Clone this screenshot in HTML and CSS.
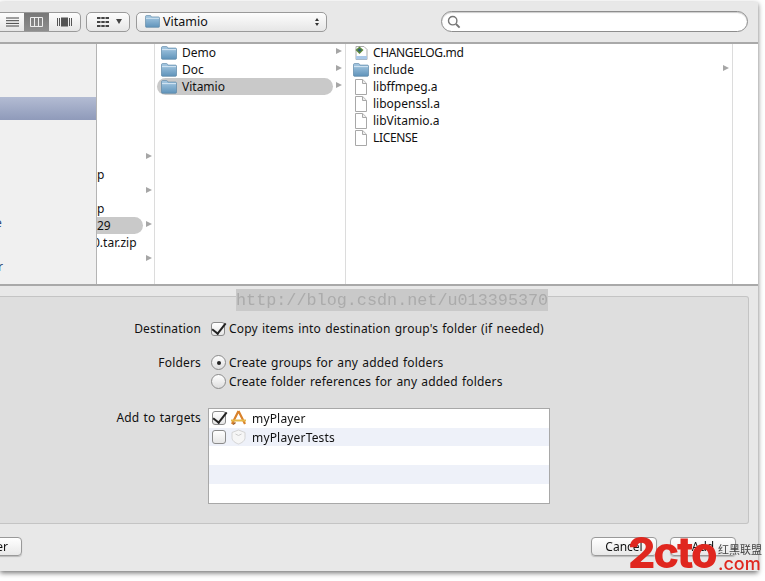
FILE: index.html
```html
<!DOCTYPE html>
<html lang="en">
<head>
<meta charset="utf-8">
<title>Add files</title>
<link rel="stylesheet" href="styles.css">
</head>
<body>
<svg class="defs" width="0" height="0" aria-hidden="true">
  <defs>
    <linearGradient id="fg" x1="0" y1="0" x2="0" y2="1"><stop offset="0" stop-color="#a9cbe4"/><stop offset="1" stop-color="#5f93ba"/></linearGradient>
    <symbol id="folder" viewBox="0 0 16 14">
      <path d="M.5 3V1.6C.5 1 1 .6 1.5.6h4c.6 0 .9.3 1.1.9l.2.6h7.7c.6 0 1 .4 1 1v9.2c0 .6-.4 1-1 1H1.5c-.6 0-1-.4-1-1z" fill="url(#fg)" stroke="#5d87a6" stroke-width=".7"/>
      <path d="M1 3.6h14" stroke="#d5e6f3" stroke-width="1"/>
    </symbol>
    <symbol id="doc" viewBox="0 0 12 16">
      <path d="M.5.5h7.2l3.8 3.8v11.2H.5z" fill="#fff" stroke="#a8a8a8"/>
      <path d="M7.5.7v3.8h3.8" fill="#eee" stroke="#a8a8a8"/>
    </symbol>
  </defs>
</svg>
<main class="window">
  <header class="toolbar">
    <div class="seg">
      <span class="seg-item seg-list"><svg width="13" height="10" viewBox="0 0 13 10"><path d="M0 1h13M0 3.7h13M0 6.4h13M0 9h13" stroke="#444" fill="none"/></svg></span>
      <span class="seg-item seg-on"><svg width="13" height="10" viewBox="0 0 13 10"><path d="M.5.5h12v9H.5zM4.5.5v9M8.5.5v9" stroke="#eee" fill="none"/></svg></span>
      <span class="seg-item seg-flow"><svg width="15" height="10" viewBox="0 0 15 10"><path d="M.5 1v8M2.5 1v8M12.5 1v8M14.5 1v8" stroke="#555" fill="none"/><path d="M4 .5h7v9H4z" fill="#555"/></svg></span>
    </div>
    <div class="btn-group"><svg width="12" height="10" viewBox="0 0 12 10"><path d="M0 1h3.5M4.3 1h3.4M8.5 1H12M0 5h3.5M4.3 5h3.4M8.5 5H12M0 9h3.5M4.3 9h3.4M8.5 9H12" stroke="#444" stroke-width="1.8" fill="none"/></svg><i class="down"></i></div>
    <div class="popup">
      <svg class="ico-16" width="15" height="13"><use href="#folder"/></svg>
      <span class="popup-name">Vitamio</span>
      <span class="updown"><i class="up-a"></i><i class="down-a"></i></span>
    </div>
    <div class="search"><svg width="14" height="14" viewBox="0 0 14 14"><circle cx="5.7" cy="5.7" r="4.2" fill="none" stroke="#777" stroke-width="1.4"/><path d="M9 9l3.6 3.6" stroke="#777" stroke-width="1.9"/></svg></div>
  </header>

  <section class="browser">
    <aside class="col-side">
      <div class="side-sel"></div>
      <div class="side-row"><span class="clip-e">e</span></div>
      <div class="side-row"></div>
      <div class="side-row"><span class="clip-r">r</span></div>
    </aside>
    <div class="col col-a">
      <div class="row"><span class="arrow"></span></div>
      <div class="row"><span class="name">p</span></div>
      <div class="row"><span class="arrow"></span></div>
      <div class="row"><span class="name">p</span></div>
      <div class="row"><span class="pill-end"><span class="name">29</span></span><span class="arrow"></span></div>
      <div class="row"><span class="name name-zip">0.tar.zip</span></div>
      <div class="row"><span class="arrow"></span></div>
    </div>
    <div class="col col-b">
      <div class="frow"><svg width="16" height="14"><use href="#folder"/></svg><span>Demo</span><span class="arrow"></span></div>
      <div class="frow"><svg width="16" height="14"><use href="#folder"/></svg><span>Doc</span><span class="arrow"></span></div>
      <div class="frow frow-sel"><svg width="16" height="14"><use href="#folder"/></svg><span>Vitamio</span><span class="arrow"></span></div>
    </div>
    <div class="col col-c">
      <div class="drow"><svg width="16" height="16" viewBox="0 0 16 16"><path d="M3 1.5h8l3 3v10H3z" fill="#fff" stroke="#aaa"/><path d="M3 11h11v3.5H3z" fill="#a9c8e8"/><path d="M6.5 1.5l4 3.5-4 4-4-4z" fill="#5c8a3a"/><path d="M6.5 3.5l2 1.6-2 2-2-2z" fill="#2f5a82"/></svg><span class="caps">CHANGELOG.md</span></div>
      <div class="drow"><svg width="16" height="14"><use href="#folder"/></svg><span>include</span><span class="arrow"></span></div>
      <div class="drow"><svg width="12" height="16" class="docico"><use href="#doc"/></svg><span>libffmpeg.a</span></div>
      <div class="drow"><svg width="12" height="16" class="docico"><use href="#doc"/></svg><span>libopenssl.a</span></div>
      <div class="drow"><svg width="12" height="16" class="docico"><use href="#doc"/></svg><span>libVitamio.a</span></div>
      <div class="drow"><svg width="12" height="16" class="docico"><use href="#doc"/></svg><span class="caps">LICENSE</span></div>
    </div>
    <div class="col col-d"></div>
  </section>

  <section class="lower">
    <form class="panel">
      <div class="lbl">Destination</div>
      <div class="opt"><span class="check is-on"></span><span>Copy items into destination group's folder (if needed)</span></div>
      <div class="lbl lbl-folders">Folders</div>
      <div class="opts lbl-folders">
        <div class="opt"><span class="radio is-on"></span><span>Create groups for any added folders</span></div>
        <div class="opt"><span class="radio"></span><span>Create folder references for any added folders</span></div>
      </div>
      <div class="lbl lbl-targets">Add to targets</div>
      <div class="targets">
        <div class="trow"><span class="check is-on"></span><svg width="17" height="16" viewBox="0 0 17 16"><path d="M8.5 1L2 14M8.5 1L15 14" stroke="#d9822b" stroke-width="2.2" fill="none"/><path d="M1 10.5h15" stroke="#e6b84a" stroke-width="2"/><path d="M3 14.5l2.5-2" stroke="#a05a20" stroke-width="1.6"/></svg><span>myPlayer</span></div>
        <div class="trow trow-alt"><span class="check"></span><svg width="17" height="16" viewBox="0 0 17 16"><path d="M8.5 1l6.5 2.5v5c0 3.500-3.500 5.500-6.500 6.500C5.500 14 2 12 2 8.500v-5z" fill="#f6f6f6" stroke="#d4d4d4"/><path d="M5.500 5l3 1.500 3-1.500" fill="none" stroke="#ccc"/></svg><span>myPlayerTests</span></div>
        <div class="trow"></div>
        <div class="trow trow-alt"></div>
        <div class="trow"></div>
      </div>
    </form>
    <footer class="actions">
      <button class="btn btn-new" type="button">New Folder</button>
      <span class="spacer"></span>
      <button class="btn" type="button">Cancel</button>
      <button class="btn" type="button">Add</button>
    </footer>
  </section>
</main>
<div class="watermark">http://blog.csdn.net/u013395370</div>
<div class="logo"><span class="logo-2cto">2cto</span><span class="logo-side"><span class="logo-cn">红黑联盟</span><span class="logo-com">.com</span></span></div>
</body>
</html>
```
FILE: styles.css
```css
* { box-sizing: border-box; }
html, body { margin: 0; padding: 0; }
body {
  width: 765px; height: 581px; overflow: hidden; background: #fff; position: relative;
  font-family: "Noto Sans", "Open Sans", sans-serif; font-size: 12px; color: #111;
}
.defs { position: absolute; }
.window {
  width: 758px; height: 569px; margin-top: 2px; background: #e8e8e8;
  box-shadow: 0 2px 5px rgba(0,0,0,.55); display: flex; flex-direction: column; overflow: hidden;
  filter: blur(.35px);
}
.toolbar {
  height: 42px; flex: none; display: flex; align-items: center; background: #e8e8e8;
  border-bottom: 2px solid #a9a9a9; padding: 0 10px 1px 0;
}
.seg {
  width: 81px; height: 20px; display: flex; border: 1px solid #9a9a9a; border-left: 0;
  border-radius: 0 5px 5px 0; background: linear-gradient(#fdfdfd, #e6e6e6); overflow: hidden;
}
.seg-item { display: flex; align-items: center; justify-content: center; }
.seg-list { width: 24px; }
.seg-on { width: 25px; background: linear-gradient(#777, #8e8e8e); }
.seg-flow { flex: 1; }
.btn-group {
  width: 44px; height: 20px; margin-left: 5px; border: 1px solid #9a9a9a; border-radius: 5px;
  background: linear-gradient(#fdfdfd, #e6e6e6); display: flex; align-items: center; gap: 7px; padding-left: 10px;
}
.down { width: 0; height: 0; border: 3.5px solid transparent; border-top: 5px solid #444; border-bottom: 0; }
.popup {
  width: 191px; height: 20px; margin-left: 6px; border: 1px solid #9a9a9a; border-radius: 5px;
  background: linear-gradient(#fdfdfd, #e6e6e6); display: flex; align-items: center; padding: 0 7px 0 8px;
}
.popup-name { margin-left: 3px; flex: 1; font-size: 12.5px; }
.updown { display: flex; flex-direction: column; gap: 2px; }
.up-a, .down-a { width: 0; height: 0; border: 2.5px solid transparent; }
.up-a { border-bottom: 3.5px solid #333; border-top: 0; }
.down-a { border-top: 3.5px solid #333; border-bottom: 0; }
.search {
  width: 307px; height: 21px; margin-left: auto; border: 1px solid #8d8d8d; border-radius: 11px;
  background: #fff; box-shadow: inset 0 1px 1px #ccc; display: flex; align-items: center; padding-left: 5px;
}
.browser { height: 242px; flex: none; display: flex; background: #fff; border-bottom: 2px solid #a9a9a9; }
.col-side {
  width: 97px; flex: none; background: #f0f0f0; border-right: 1px solid #b4b4b4; padding-top: 53px; overflow: hidden;
}
.side-sel { height: 23px; margin-bottom: 92px; background: linear-gradient(#b3bcd3, #8f9aba); }
.side-row { height: 22px; line-height: 22px; color: #2d4470; }
.clip-e { margin-left: -5px; }
.clip-r { margin-left: -2px; }
.col { flex: none; border-right: 1px solid #dcdcdc; overflow: hidden; }
.col-a { width: 58px; padding-top: 105px; }
.row { height: 17px; line-height: 17px; display: flex; align-items: center; position: relative; }
.name { font-size: 12px; }
.name-zip { margin-left: -4px; white-space: nowrap; }
.pill-end {
  width: 46px; height: 17px; line-height: 17px; background: #c9c9c9; border-radius: 0 9px 9px 0;
}
.row .arrow { position: absolute; left: 49px; top: 4px; }
.arrow {
  width: 0; height: 0; border: 3.5px solid transparent; border-left: 6px solid #a6a6a6; border-right: 0; flex: none;
}
.col-b { width: 191px; padding-left: 2px; }
.frow { height: 17px; display: flex; align-items: center; padding-left: 4px; position: relative; width: 176px; }
.frow span:not(.arrow) { margin-left: 5px; }
.frow .arrow { position: absolute; left: 179px; top: 4px; }
.frow-sel { background: #c9c9c9; border-radius: 9px; }
.col-c { width: 387px; padding-left: 7px; }
.drow { height: 17px; display: flex; align-items: center; position: relative; }
.drow span:not(.arrow) { margin-left: 4px; }
.drow .caps { letter-spacing: -.35px; }
.drow .arrow { position: absolute; right: 3px; top: 4px; }
.docico { margin: 0 2px; }
.col-d { flex: 1; border: 0; }
.lower { flex: 1; display: flex; flex-direction: column; padding-top: 10px; }
.panel {
  width: 749px; height: 228px; background: #dedede; border: 1px solid #c4c4c4; border-left: 0;
  border-radius: 0 3px 3px 0; display: grid; grid-template-columns: 201px 1fr; column-gap: 10px;
  align-content: start; padding-top: 23px; letter-spacing: .17px; word-spacing: .9px;
}
.lbl { text-align: right; line-height: 17px; }
.lbl-folders { margin-top: 17px; }
.lbl-targets { margin-top: 19px; }
.opts { display: flex; flex-direction: column; gap: 2px; }
.opt { height: 17px; display: flex; align-items: center; gap: 3px; }
.opt > .check + span { margin-left: 1px; }
.check {
  width: 14px; height: 14px; flex: none; border: 1px solid #8b8b8b; border-radius: 3px; position: relative;
  background: linear-gradient(#fff, #e6e6e6);
}
.check.is-on::after {
  content: ""; position: absolute; left: 3px; top: -3px; width: 6px; height: 12px;
  border: solid #222; border-width: 0 2px 2px 0; transform: rotate(38deg);
}
.radio {
  width: 15px; height: 15px; flex: none; border: 1px solid #8b8b8b; border-radius: 50%;
  background: linear-gradient(#fff, #ddd); position: relative;
}
.radio.is-on::after {
  content: ""; position: absolute; left: 4.5px; top: 4.500px; width: 4px; height: 4px; border-radius: 50%; background: #222;
}
.targets {
  width: 342px; height: 96px; margin: 18px 0 0 -3px; background: #fff; border: 1px solid #a8a8a8;
  display: flex; flex-direction: column;
}
.trow { height: 18.700px; display: flex; align-items: center; padding-left: 3px; }
.trow-alt { background: #eef1f9; }
.trow svg { margin-left: 4px; }
.trow span:last-child:not(.check) { margin-left: 5px; }
.actions { display: flex; align-items: flex-start; padding-top: 13px; gap: 13px; width: 736px; }
.btn {
  width: 66px; height: 19px; padding: 0; border: 1px solid #999; border-radius: 4px; color: #111;
  background: linear-gradient(#fff, #e8e8e8); font: inherit; line-height: 16px; box-shadow: 0 1px 1px #bbb;
}
.btn-new { width: 90px; margin-left: -68px; text-align: right; padding-right: 13px; white-space: nowrap; }
.spacer { flex: 1; }
.watermark {
  position: absolute; left: 236px; top: 289px; width: 312px; height: 22px; background: #c9c9c9;
  font-family: "Liberation Mono", monospace; font-size: 16.800px; line-height: 23px; color: #ababab; white-space: nowrap;
}
.logo { position: absolute; left: 628px; top: 530px; display: flex; align-items: flex-end; height: 44px; }
.logo-2cto {
  display: block; font-family: "Inter", sans-serif; font-weight: 800; font-size: 43px; line-height: 44px; color: #e0271f;
  letter-spacing: -2px; width: 97px; white-space: nowrap;
}
.logo-side { display: flex; flex-direction: column; margin-left: -7px; margin-bottom: 2px; }
.logo-cn { font-family: "Noto Sans CJK SC", sans-serif; font-size: 11px; line-height: 12px; color: #444; }
.logo-com { font-family: "Inter", sans-serif; font-weight: 500; font-size: 18px; line-height: 17px; color: #e0271f; }
```
